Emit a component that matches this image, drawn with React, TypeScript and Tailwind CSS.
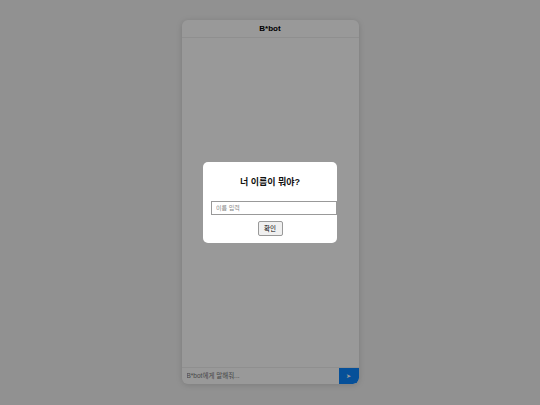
import React, { useState } from "react";

export default function App() {
  const [name, setName] = useState("");
  const [msg, setMsg] = useState("");

  return (
    <div
      className="relative w-[540px] h-[405px] bg-[#f2f2f2] flex justify-center pt-[20px] overflow-hidden"
      style={{ fontFamily: '"Liberation Sans", "Noto Sans CJK KR", sans-serif' }}
    >
      {/* Chat window */}
      <div className="w-[177px] h-[364px] bg-white rounded-[6px] shadow-[0_1px_6px_rgba(0,0,0,0.15)] flex flex-col overflow-hidden">
        <div className="h-[18px] flex items-center justify-center border-b border-[#eeeeee] text-[8px] font-bold text-black">
          B*bot
        </div>
        <div className="flex-1" />
        <div className="h-[17px] flex border-t border-[#eeeeee]">
          <input
            value={msg}
            onChange={e => setMsg(e.target.value)}
            placeholder="B*bot에게 말해줘..."
            className="flex-1 min-w-0 px-[5px] text-[6.5px] outline-none placeholder:text-[#777]"
          />
          <button className="w-[20px] h-full bg-[#0a86ff] text-white text-[6px] flex items-center justify-center rounded-br-[6px]">
            ➤
          </button>
        </div>
      </div>

      {/* Overlay */}
      <div className="absolute inset-0 bg-black/40 flex items-center justify-center">
        <div className="w-[134px] h-[81px] bg-white rounded-[5px] px-[8px] pt-[16px] flex flex-col items-start">
          <div className="w-full text-center text-[9px] font-bold text-[#111] leading-none">너 이름이 뭐야?</div>
          <input
            value={name}
            onChange={e => setName(e.target.value)}
            placeholder="이름 입력"
            className="mt-[14px] w-[126px] h-[14px] border border-[#999] px-[4px] text-[6px] outline-none placeholder:text-[#888] shrink-0"
          />
          <div className="w-full flex justify-center mt-[6px]">
            <button className="w-[25px] h-[15px] border border-[#999] bg-[#f0f0f0] rounded-[2px] text-[6.5px] text-black flex items-center justify-center">
              확인
            </button>
          </div>
        </div>
      </div>
    </div>
  );
}
